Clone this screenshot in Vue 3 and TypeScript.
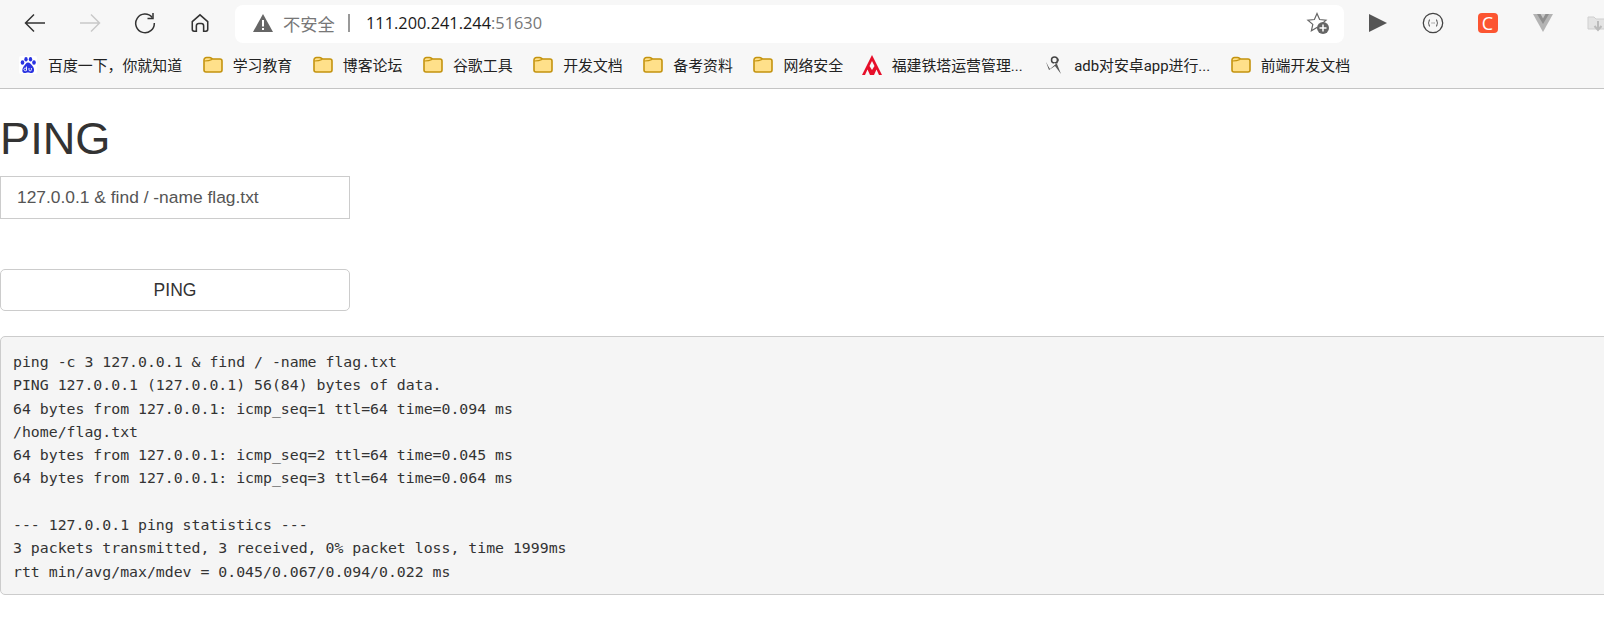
<script setup lang="ts">
const folders = (label: string) => ({ label, kind: 'folder' })
const bookmarks = [
  { label: '百度一下，你就知道', kind: 'baidu' },
  folders('学习教育'),
  folders('博客论坛'),
  folders('谷歌工具'),
  folders('开发文档'),
  folders('备考资料'),
  folders('网络安全'),
  { label: '福建铁塔运营管理...', kind: 'tower' },
  { label: 'adb对安卓app进行...', kind: 'adb' },
  folders('前端开发文档'),
]
const output = `ping -c 3 127.0.0.1 & find / -name flag.txt
PING 127.0.0.1 (127.0.0.1) 56(84) bytes of data.
64 bytes from 127.0.0.1: icmp_seq=1 ttl=64 time=0.094 ms
/home/flag.txt
64 bytes from 127.0.0.1: icmp_seq=2 ttl=64 time=0.045 ms
64 bytes from 127.0.0.1: icmp_seq=3 ttl=64 time=0.064 ms

--- 127.0.0.1 ping statistics ---
3 packets transmitted, 3 received, 0% packet loss, time 1999ms
rtt min/avg/max/mdev = 0.045/0.067/0.094/0.022 ms`
</script>

<template>
  <div class="page">
    <header class="chrome">
      <div class="toolbar">
        <div class="nav">
          <svg class="nav-icon" viewBox="0 0 22 22" fill="none" stroke="#333" stroke-width="1.5"><path d="M21 11H1.500M10 2.500 1.500 11l8.500 8.500" /></svg>
          <svg class="nav-icon" viewBox="0 0 22 22" fill="none" stroke="#c9c9c9" stroke-width="1.5"><path d="M1 11h19.500M12 2.500l8.500 8.500-8.500 8.500" /></svg>
          <svg class="nav-icon" viewBox="0 0 22 22" fill="none" stroke="#333" stroke-width="1.5"><path d="M18.200 5.500A9.300 9.300 0 1 0 20.300 11" /><path d="M19 1v5.500h-5.500" /></svg>
          <svg class="nav-icon home" viewBox="0 0 22 22" fill="none" stroke="#333" stroke-width="1.7"><path d="M2.500 9.500 11 2l8.500 7.500V18a2 2 0 0 1-2 2H15v-6a2.500 2.500 0 0 0-2.500-2.500h-3A2.500 2.500 0 0 0 7 14v6H4.500a2 2 0 0 1-2-2z" /></svg>
        </div>
        <div class="address">
          <svg class="warn" viewBox="0 0 20 18"><path d="M10 0 20 18H0z" fill="#666" /><path d="M9 6h2v6.500H9zM9 14h2v2H9z" fill="#fff" /></svg>
          <span class="insecure">不安全</span>
          <span class="divider"></span>
          <span class="url"><span class="host">111.200.241.244</span><span class="port">:51630</span></span>
          <svg class="star" viewBox="0 0 24 24"><path d="M11 2.500l2.600 6 6.400.6-4.800 4.300 1.400 6.300-5.600-3.300-5.600 3.300 1.400-6.300L1.900 9.100l6.500-.6z" fill="none" stroke="#666" stroke-width="1.200" /><circle cx="17" cy="17" r="6" fill="#666" /><path d="M17 13.500v7M13.500 17h7" stroke="#fff" stroke-width="1.500" /></svg>
        </div>
        <div class="extensions">
          <span class="ext"><svg width="20" height="20" viewBox="0 0 20 20"><path d="M1 1 19 10 1 19z" fill="#555" /></svg></span>
          <span class="ext"><svg width="22" height="22" viewBox="0 0 22 22"><circle cx="11" cy="11" r="9.700" fill="none" stroke="#444" stroke-width="1.300" /><path d="M8 7.500C6.500 7.500 7.500 11 6.200 11 7.500 11 6.500 14.500 8 14.500M14 7.500c1.500 0 .5 3.500 1.800 3.500-1.300 0-.3 3.500-1.800 3.500" fill="none" stroke="#444" /><path d="M9.500 11h.8M10.700 11h.8M11.900 11h.8" stroke="#777" /></svg></span>
          <span class="ext"><span class="c-badge">C</span></span>
          <span class="ext"><svg width="20" height="18" viewBox="0 0 20 18"><path d="M0 0h20L10 18z" fill="#b4b4b4" /><path d="M4 0h12l-6 10z" fill="#8f8f8f" /><path d="M7.500 0h5L10 4.500z" fill="#c8c8c8" /></svg></span>
          <span class="ext"><svg width="22" height="22" viewBox="0 0 22 22"><path d="M1 5h6l2 2h12v10H1z" fill="#e4e4e4" stroke="#cfcfcf" /><path d="M11 9v8M7.500 14l3.500 4 3.500-4" fill="none" stroke="#bbb" stroke-width="2" /></svg></span>
        </div>
      </div>
      <nav class="bookmarks">
        <a v-for="item in bookmarks" :key="item.label" class="bookmark">
          <svg v-if="item.kind === 'folder'" class="bm-icon folder" viewBox="0 0 20 17"><path d="M1 4A2.500 2.500 0 0 1 3.500 1.500h3c1.500 0 2 1 3 1.500h7.500A2 2 0 0 1 19 5v9A2 2 0 0 1 17 16H3A2 2 0 0 1 1 14z" fill="#ffe08a" stroke="#c4930e" stroke-width="1.600" /><path d="M1.500 5C4 5 6 5 9 3.500" stroke="#c4930e" stroke-width="1.200" fill="none" /></svg>
          <svg v-else-if="item.kind === 'baidu'" class="bm-icon baidu" viewBox="0 0 18 18"><rect width="18" height="18" rx="2" fill="#fff" /><g fill="#2932e1"><ellipse cx="3.500" cy="6.500" rx="1.800" ry="2.300" /><ellipse cx="7" cy="3.300" rx="1.700" ry="2.300" /><ellipse cx="11.500" cy="3.300" rx="1.700" ry="2.300" /><ellipse cx="15" cy="6.500" rx="1.800" ry="2.200" /><path d="M9 6.500c-2 0-2.500 2-4 3.500S2 17 5.500 17c1.500 0 2.300-.5 3.500-.5s2 .5 3.500.5c3.500 0 3-5 1-7S11 6.500 9 6.500z" /></g><path d="M7.500 10.500v4.200M7.500 13.400a1.300 1.300 0 1 0 0 .1M10 12v1.700a1.200 1.200 0 0 0 2.400 0V12" fill="none" stroke="#fff" stroke-width=".9" /></svg>
          <svg v-else-if="item.kind === 'tower'" class="bm-icon tower" viewBox="0 0 20 20"><path fill-rule="evenodd" d="M10 0 20 20h-3l-2.500-5.500L12 20H8l-2.500-5.500L3 20H0zM10 6 7.500 11 10 15l2.500-4z" fill="#e60f2a" /></svg>
          <svg v-else class="bm-icon adb" viewBox="0 0 18 20"><circle cx="9.500" cy="5" r="3" fill="none" stroke="#444" stroke-width="1.500" /><path d="M1 7 5 14 12 8l1-5 1 2-2 4 4 10-6-8-6 4z" fill="#555" /><path d="M3 9.500 5 12.500 10 8.500" fill="none" stroke="#f7f7f7" stroke-width="1.100" /></svg>
          <span>{{ item.label }}</span>
        </a>
      </nav>
    </header>
    <main class="content">
      <h1 class="title">PING</h1>
      <input class="field" type="text" value="127.0.0.1 & find / -name flag.txt" />
      <button class="ping" type="button">PING</button>
      <pre class="result">{{ output }}</pre>
    </main>
  </div>
</template>

<style>
html, body { margin: 0; background: #fff; overflow: hidden; }
</style>

<style scoped>
.page { width: 1604px; height: 631px; overflow: hidden; font-family: "Liberation Sans", Arial, sans-serif; }
.chrome { background: #f7f7f7; border-bottom: 1px solid #c4c4c4; height: 88px; box-sizing: content-box; }
.toolbar { height: 48px; display: flex; align-items: center; padding-left: 7px; box-sizing: border-box; }
.nav { display: flex; gap: 33px; width: 228px; flex: none; padding-left: 17px; box-sizing: border-box; margin-bottom: 2px; }
.nav-icon { width: 22px; height: 22px; flex: none; }
.home { width: 20px; height: 20px; margin: 1px 0 1px 1px; }
.address { width: 1109px; height: 38px; flex: none; background: #fff; border-radius: 8px; display: flex; align-items: center; padding-left: 18px; box-sizing: border-box; }
.warn { width: 20px; height: 18px; flex: none; margin-bottom: 2px; }
.insecure { font-family: "Noto Sans CJK SC", sans-serif; font-size: 17.300px; color: #777; margin-left: 10px; width: 53px; white-space: nowrap; margin-bottom: 2px; }
.divider { width: 2px; height: 18px; background: #999; margin: 0 16px 2px 12px; flex: none; }
.url { font-family: "Open Sans", sans-serif; font-size: 16.350px; flex: 1; white-space: nowrap; margin-bottom: 2px; }
.host { color: #1a1a1a; }
.port { color: #777; }
.star { width: 24px; height: 24px; margin: 0 14px 2px 0; flex: none; }
.extensions { display: flex; flex: none; margin: 0 0 2px 6px; }
.ext { width: 55px; height: 24px; display: flex; align-items: center; justify-content: center; flex: none; }
.c-badge { width: 20px; height: 20px; border-radius: 4px; background: #fc5531; color: #fff; font-family: "Open Sans", sans-serif; font-size: 18px; line-height: 20px; text-align: center; }
.bookmarks { height: 40px; box-sizing: border-box; padding: 0 0 7px 19px; display: flex; align-items: center; font-family: Roboto, "Noto Sans CJK SC", sans-serif; font-size: 14.900px; color: #222; white-space: nowrap; }
.bookmark { display: flex; align-items: center; margin-right: 20.600px; }
.bm-icon { width: 18px; height: 18px; margin-right: 10px; flex: none; }
.baidu { margin-right: 11px; }
.folder { width: 20px; height: 17px; }
.tower { width: 20px; height: 20px; margin-left: -2px; }
.adb { width: 18px; height: 20px; margin: 0 11px 0 2px; }
.content { display: flex; flex-direction: column; align-items: flex-start; }
.title { font-size: 45.200px; font-weight: 500; line-height: 50px; color: #333; margin: 25px 0 0; }
.field { width: 350px; height: 43px; margin-top: 12px; padding: 0 16px; box-sizing: border-box; border: 1px solid #ccc; font-family: inherit; font-size: 17.400px; color: #555; background: #fff; outline: none; border-radius: 0; }
.ping { width: 350px; height: 42px; margin-top: 50px; border: 1px solid #ccc; border-radius: 5px; background: #fff; color: #333; font-family: inherit; font-size: 17.500px; padding: 0; }
.result { width: 1640px; height: 259px; margin: 25px 0 0; box-sizing: border-box; padding: 13px 12px; border: 1px solid #ccc; border-radius: 5px; background: #f5f5f5; color: #333; font-family: "DejaVu Sans Mono", monospace; font-size: 14.830px; line-height: 23.300px; overflow: hidden; }
</style>
